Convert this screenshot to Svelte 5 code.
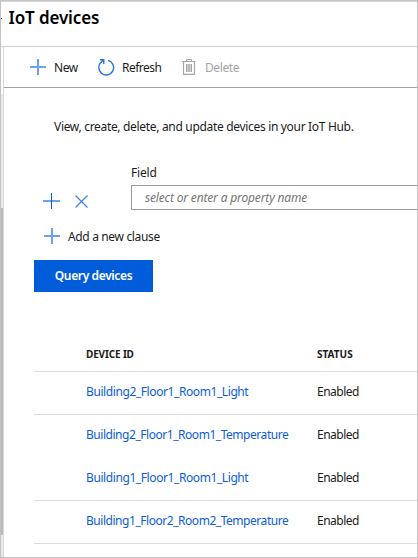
<script>
  const devices = [
    { id: 'Building2_Floor1_Room1_Light', kind: 'light', status: 'Enabled', line: true },
    { id: 'Building2_Floor1_Room1_Temperature', kind: 'temp', status: 'Enabled', line: false },
    { id: 'Building1_Floor1_Room1_Light', kind: 'light', status: 'Enabled', line: true },
    { id: 'Building1_Floor2_Room2_Temperature', kind: 'temp', status: 'Enabled', line: true }
  ];
</script>

<div class="frame">
  <header><span class="dash"></span><h1>IoT devices</h1></header>
  <div class="body">
    <div class="scroll"><div class="thumb"></div></div>
    <main>
      <nav>
        <button class="tool new">
          <svg width="16" height="16" viewBox="0 0 16 16" shape-rendering="crispEdges">
            <path d="M0 7h16v2H0zM7 0h2v16H7z" fill="#6ba3ee" />
          </svg>
          <span>New</span>
        </button>
        <button class="tool refresh">
          <svg width="17" height="17" viewBox="0 0 17 17" fill="none" stroke="#2472e0" stroke-width="1.4">
            <path d="M10 1.4A7.4 7.4 0 1 1 3.6 2.8L5.4 1" />
            <path d="M2 .8h3.8v4.2" />
          </svg>
          <span>Refresh</span>
        </button>
        <button class="tool delete">
          <svg width="14" height="16" viewBox="0 0 14 16" fill="none" stroke="#a6a6a6">
            <path d="M0 2.5h13.5M4.5 2.5v-2h5v2" />
            <path d="M1.5 2.5v12.8h11V2.5" stroke-width="1.2" />
            <path d="M4 5h6v8H4z" fill="#cfcfcf" stroke="none" />
            <path d="M4.5 5v8M7 5v8M9.5 5v8" />
          </svg>
          <span>Delete</span>
        </button>
      </nav>
      <p class="intro">View, create, delete, and update devices in your IoT Hub.</p>
      <div class="query">
        <div class="ops">
          <svg width="17" height="16" viewBox="0 0 17 16" shape-rendering="crispEdges">
            <path d="M0 7h17v2H0z" fill="#6ba3ee" />
            <path d="M8 0h1v16H8z" fill="#0a5bd6" />
          </svg>
          <svg class="cross" width="13" height="13" viewBox="0 0 13 13" stroke="#3a80e4" stroke-width="1.2">
            <path d="M.5 .5l12 12M12.5 .5l-12 12" />
          </svg>
        </div>
        <div class="field">
          <span class="label">Field</span>
          <div class="input"><span>select or enter a property name</span></div>
        </div>
      </div>
      <div class="add">
        <svg width="16" height="16" viewBox="0 0 16 16" shape-rendering="crispEdges">
          <path d="M0 7h16v2H0zM7 0h2v16H7z" fill="#6ba3ee" />
        </svg>
        <span>Add a new clause</span>
      </div>
      <button class="primary"><span>Query devices</span></button>
      <div class="table">
        <div class="row head"><span>DEVICE ID</span><span class="st">STATUS</span></div>
        {#each devices as d}
          <div class="row" class:plain={!d.line}>
            <a href="#device" class={d.kind}>{d.id}</a><span class="status">{d.status}</span>
          </div>
        {/each}
      </div>
    </main>
  </div>
</div>

<style>
  :global(body) { margin: 0; overflow: hidden; }
  .frame {
    box-sizing: border-box; width: 418px; height: 558px; overflow: hidden;
    border: 1px solid #c3c3c3; background: #fff; color: #1b1b1b;
    font: 12px/16px "Noto Sans", "Open Sans", sans-serif;
    box-shadow: inset 0 1px #d6d6d6;
    display: flex; flex-direction: column;
  }
  header {
    box-sizing: border-box; height: 46px; flex: none; border-bottom: 1px solid #ccc;
    display: flex; align-items: flex-start;
  }
  .dash { width: 1px; height: 1px; background: #333; margin: 17px 6.5px 0 0; }
  h1 { margin: 5px 0 0; font-size: 17px; line-height: 24px; font-weight: 600; color: #000; letter-spacing: -0.12px; white-space: nowrap; }
  .body { flex: 1; display: flex; min-height: 0; }
  .scroll { box-sizing: border-box; width: 3px; flex: none; border-right: 1px solid #d8d8d8; padding-top: 161px; background: linear-gradient(#fff 47px, #e9e9e9 47px); }
  .thumb { height: 327px; background: #bababa; }
  main { flex: 1; min-width: 0; display: flex; flex-direction: column; align-items: flex-start; }
  nav { box-sizing: border-box; width: 100%; height: 41px; flex: none; border-bottom: 1px solid #a3a3a3; display: flex; align-items: center; padding-left: 26px; }
  button { border: 0; padding: 0; background: none; font: inherit; color: inherit; text-align: left; }
  svg { display: block; flex: none; }
  span, a, p { white-space: nowrap; }
  .tool { display: flex; align-items: center; }
  .new { width: 68px; gap: 8px; }
  .refresh { width: 84px; gap: 7px; }
  .delete { color: #a3a3a3; gap: 9px; }
  .tool span { position: relative; top: 1px; letter-spacing: -0.4px; }
  .refresh span { letter-spacing: -0.5px; }
  .intro { margin: 31px 0 0 50px; letter-spacing: -0.32px; }
  .query { display: flex; width: 100%; margin-top: 30px; }
  .ops { padding: 28px 0 0 39px; width: 88px; display: flex; align-items: flex-start; }
  .cross { margin: 2px 0 0 15px; }
  .field { flex: 1; min-width: 0; }
  .label { display: block; letter-spacing: -0.2px; }
  .input { box-sizing: border-box; height: 25px; margin-top: 4px; border: 1px solid #999; border-right: 0; padding: 4px 0 0 13px; color: #767676; font-style: italic; letter-spacing: -0.16px; }
  .add { display: flex; align-items: center; gap: 8px; margin: 18px 0 0 40px; }
  .add span { letter-spacing: -0.35px; position: relative; top: 1px; }
  .primary { width: 119px; height: 32px; flex: none; margin: 16px 0 0 30px; background: #015cda; color: #fff; font-weight: 600; text-align: center; letter-spacing: -0.37px; }
  .table { margin: 45px 0 0 30px; align-self: stretch; }
  .row { box-sizing: border-box; height: 43px; display: flex; align-items: center; padding: 0 0 2px 52px; border-bottom: 1px solid #d9dce3; }
  .row.plain { border-color: transparent; }
  .head { height: 35px; font-size: 10px; font-weight: 700; padding-bottom: 0; }
  .head > :first-child { letter-spacing: -0.15px; }
  .row > :first-child { width: 231px; flex: none; }
  .row a { color: #0a5dd8; text-decoration: none; letter-spacing: -0.41px; }
  .row .temp { letter-spacing: -0.46px; }
  .status { letter-spacing: -0.5px; }
</style>
